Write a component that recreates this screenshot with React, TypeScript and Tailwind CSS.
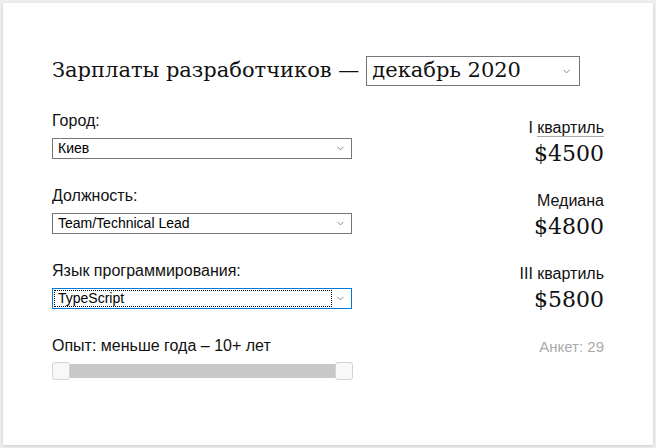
import { ChevronDown } from "lucide-react"

type Stat = {
  label: string
  value: string
  underline?: boolean
}

const stats: Stat[] = [
  { label: "I квартиль", value: "$4500", underline: true },
  { label: "Медиана", value: "$4800" },
  { label: "III квартиль", value: "$5800" },
]

const sans = "font-['Liberation_Sans',Arial,sans-serif]"
const serif = "font-['DejaVu_Serif',Georgia,serif]"

function Select({ value, focused }: { value: string; focused?: boolean }) {
  return (
    <div
      className={`flex h-[21px] w-[300px] items-center justify-between border bg-white pl-[1px] pr-[5px] ${
        focused ? "border-[#0078d7]" : "border-[#767676]"
      }`}
    >
      <div
        className={`mr-[3px] flex h-[17px] flex-1 items-center px-[3px] text-[14px] text-black ${
          focused ? "border border-dotted border-black" : "border border-transparent"
        }`}
      >
        {value}
      </div>
      <ChevronDown className="h-[11px] w-[11px] text-[#555]" strokeWidth={1.5} />
    </div>
  )
}

function Field({ label, value, focused }: { label: string; value: string; focused?: boolean }) {
  return (
    <div className="mb-[28px]">
      <div className="mb-[8px] text-[16px] leading-[18px] text-[#111]">{label}</div>
      <Select value={value} focused={focused} />
    </div>
  )
}

export default function App() {
  return (
    <div className={`h-[448px] w-[656px] bg-[#eeeeee] p-[3px] ${sans}`}>
      <div className="h-full w-full bg-white px-[49px] pt-[53px] shadow-[0_1px_3px_rgba(0,0,0,0.15)]">
        <div className="flex h-[30px] items-center">
          <h1 className={`${serif} text-[21px] font-normal text-[#111]`}>Зарплаты разработчиков —</h1>
          <div className="ml-[7px] flex h-[30px] w-[214px] items-center justify-between border border-[#767676] pl-[5px] pr-[7px]">
            <span className={`${serif} text-[21px] text-[#111]`}>декабрь 2020</span>
            <ChevronDown className="h-[11px] w-[11px] text-[#555]" strokeWidth={1.5} />
          </div>
        </div>

        <div className="mt-[26px] flex justify-between">
          <div className="w-[301px]">
            <Field label="Город:" value="Киев" />
            <Field label="Должность:" value="Team/Technical Lead" />
            <Field label="Язык программирования:" value="TypeScript" focused />
            <div>
              <div className="mb-[7px] text-[16px] leading-[18px] text-[#111]">Опыт: меньше года – 10+ лет</div>
              <div className="flex h-[18px] items-center">
                <div className="flex h-[14px] w-full items-center justify-between bg-[#c8c8c8]">
                  <div className="h-[18px] w-[18px] rounded-[3px] border border-[#d3d3d3] bg-[#f8f8f8]" />
                  <div className="h-[18px] w-[18px] rounded-[3px] border border-[#d3d3d3] bg-[#f8f8f8]" />
                </div>
              </div>
            </div>
          </div>

          <div className="flex flex-col items-end pt-[7px] text-right">
            {stats.map((stat) => (
              <div key={stat.label} className="mb-[25px] flex flex-col items-end">
                <div className="text-[16px] leading-[18px] text-[#111]">
                  {stat.underline ? (
                    <>
                      I <span className="border-b border-[#aaaaaa]">квартиль</span>
                    </>
                  ) : (
                    stat.label
                  )}
                </div>
                <div className={`${serif} mt-[4px] text-[22px] leading-[26px] text-[#111]`}>{stat.value}</div>
              </div>
            ))}
            <div className="text-[15px] leading-[18px] text-[#aaaaaa]">Анкет: 29</div>
          </div>
        </div>
      </div>
    </div>
  )
}
